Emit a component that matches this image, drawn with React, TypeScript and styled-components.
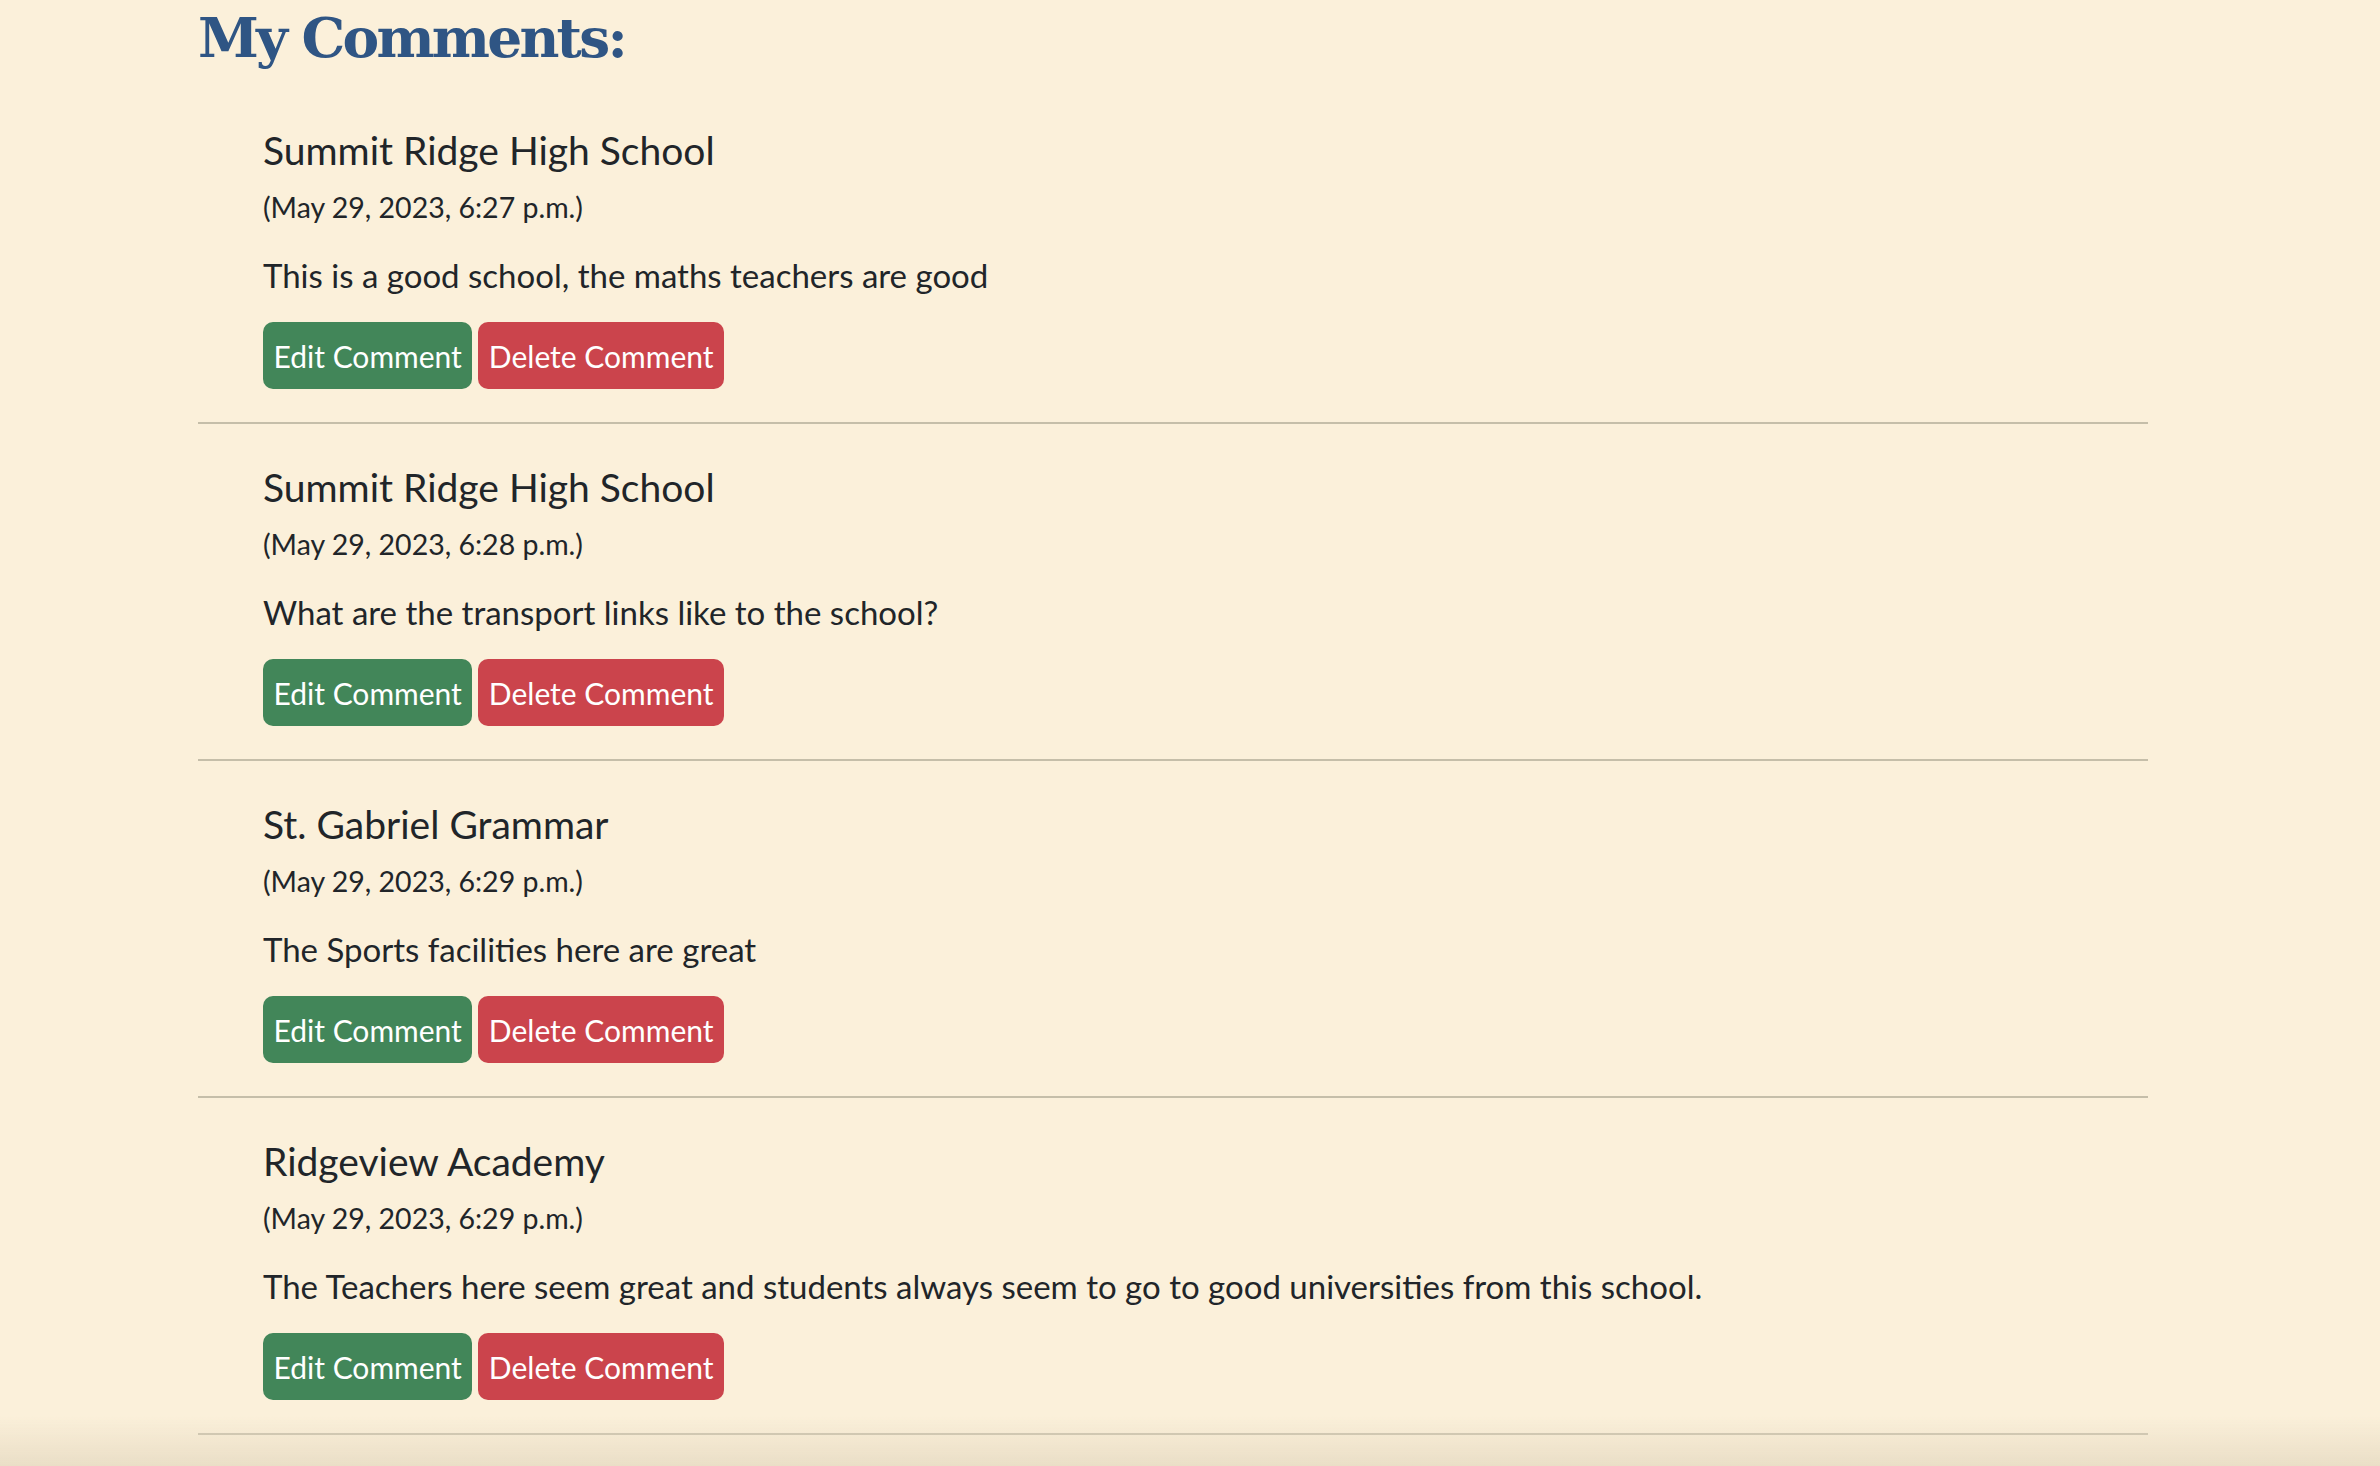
import React from "react";
import styled, { createGlobalStyle } from "styled-components";

const GlobalStyle = createGlobalStyle`
  html, body {
    margin: 0;
    padding: 0;
    background: #fbf0da;
  }
  body {
    font-family: Lato, "Open Sans", sans-serif;
    color: #212529;
  }
`;

const Page = styled.main`
  width: 1950px;
  padding-left: 198px;
  min-height: 1466px;
  box-sizing: content-box;
`;

const Heading = styled.h1`
  margin: 0 0 11px;
  font-family: "DejaVu Serif", "Liberation Serif", serif;
  font-weight: 700;
  font-size: 55px;
  line-height: 76px;
  color: #2f5584;
  letter-spacing: -2.8px;
`;

const List = styled.ul`
  list-style: none;
  margin: 0;
  padding: 0;
`;

const Item = styled.li`
  display: flex;
  flex-direction: column;
  align-items: flex-start;
  padding: 38px 0 33px 65px;
  border-bottom: 2px solid #c5bea9;
`;

const School = styled.h4`
  margin: 0;
  font-size: 39px;
  font-weight: 400;
  line-height: 50px;
`;

const Stamp = styled.p`
  margin: 12px 0 0;
  font-size: 28.5px;
  line-height: 40px;
`;

const Body = styled.p`
  margin: 26px 0 0;
  font-size: 33px;
  line-height: 44px;
`;

const Actions = styled.div`
  display: flex;
  gap: 6px;
  margin-top: 25px;
`;

const Button = styled.button<{ $tone: "edit" | "delete" }>`
  display: flex;
  align-items: center;
  height: 67px;
  padding: 0 10.5px;
  border: none;
  border-radius: 10px;
  font-family: inherit;
  font-size: 30px;
  color: #fff;
  background: ${(p) => (p.$tone === "edit" ? "#428659" : "#cb444c")};
  cursor: pointer;
`;

const BottomFade = styled.div`
  position: fixed;
  left: 0;
  right: 0;
  bottom: 0;
  height: 50px;
  pointer-events: none;
  background: linear-gradient(to bottom, rgba(236, 226, 203, 0), rgba(232, 220, 196, 0.9));
`;

const comments = [
  {
    school: "Summit Ridge High School",
    date: "(May 29, 2023, 6:27 p.m.)",
    body: "This is a good school, the maths teachers are good",
  },
  {
    school: "Summit Ridge High School",
    date: "(May 29, 2023, 6:28 p.m.)",
    body: "What are the transport links like to the school?",
  },
  {
    school: "St. Gabriel Grammar",
    date: "(May 29, 2023, 6:29 p.m.)",
    body: "The Sports facilities here are great",
  },
  {
    school: "Ridgeview Academy",
    date: "(May 29, 2023, 6:29 p.m.)",
    body: "The Teachers here seem great and students always seem to go to good universities from this school.",
  },
];

export default function App() {
  return (
    <>
      <GlobalStyle />
      <Page>
        <Heading>My Comments:</Heading>
        <List>
          {comments.map((c, i) => (
            <Item key={i}>
              <School>{c.school}</School>
              <Stamp>{c.date}</Stamp>
              <Body>{c.body}</Body>
              <Actions>
                <Button $tone="edit">Edit Comment</Button>
                <Button $tone="delete">Delete Comment</Button>
              </Actions>
            </Item>
          ))}
        </List>
      </Page>
      <BottomFade />
    </>
  );
}
